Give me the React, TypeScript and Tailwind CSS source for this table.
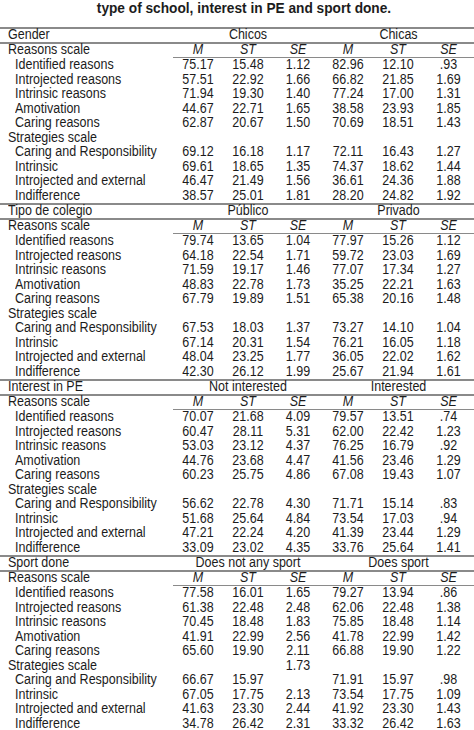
type Row = { label: string; v: string[] };

interface SectionData {
  title: string;
  g1: string;
  g2: string;
  reasons: Row[];
  strategiesSE?: string[];
  strategies: Row[];
}

const sections: SectionData[] = [
  {
    title: 'Gender',
    g1: 'Chicos',
    g2: 'Chicas',
    reasons: [
      { label: 'Identified reasons', v: ['75.17', '15.48', '1.12', '82.96', '12.10', '.93'] },
      { label: 'Introjected reasons', v: ['57.51', '22.92', '1.66', '66.82', '21.85', '1.69'] },
      { label: 'Intrinsic reasons', v: ['71.94', '19.30', '1.40', '77.24', '17.00', '1.31'] },
      { label: 'Amotivation', v: ['44.67', '22.71', '1.65', '38.58', '23.93', '1.85'] },
      { label: 'Caring reasons', v: ['62.87', '20.67', '1.50', '70.69', '18.51', '1.43'] },
    ],
    strategies: [
      { label: 'Caring and Responsibility', v: ['69.12', '16.18', '1.17', '72.11', '16.43', '1.27'] },
      { label: 'Intrinsic', v: ['69.61', '18.65', '1.35', '74.37', '18.62', '1.44'] },
      { label: 'Introjected and external', v: ['46.47', '21.49', '1.56', '36.61', '24.36', '1.88'] },
      { label: 'Indifference', v: ['38.57', '25.01', '1.81', '28.20', '24.82', '1.92'] },
    ],
  },
  {
    title: 'Tipo de colegio',
    g1: 'Público',
    g2: 'Privado',
    reasons: [
      { label: 'Identified reasons', v: ['79.74', '13.65', '1.04', '77.97', '15.26', '1.12'] },
      { label: 'Introjected reasons', v: ['64.18', '22.54', '1.71', '59.72', '23.03', '1.69'] },
      { label: 'Intrinsic reasons', v: ['71.59', '19.17', '1.46', '77.07', '17.34', '1.27'] },
      { label: 'Amotivation', v: ['48.83', '22.78', '1.73', '35.25', '22.21', '1.63'] },
      { label: 'Caring reasons', v: ['67.79', '19.89', '1.51', '65.38', '20.16', '1.48'] },
    ],
    strategies: [
      { label: 'Caring and Responsibility', v: ['67.53', '18.03', '1.37', '73.27', '14.10', '1.04'] },
      { label: 'Intrinsic', v: ['67.14', '20.31', '1.54', '76.21', '16.05', '1.18'] },
      { label: 'Introjected and external', v: ['48.04', '23.25', '1.77', '36.05', '22.02', '1.62'] },
      { label: 'Indifference', v: ['42.30', '26.12', '1.99', '25.67', '21.94', '1.61'] },
    ],
  },
  {
    title: 'Interest in PE',
    g1: 'Not interested',
    g2: 'Interested',
    reasons: [
      { label: 'Identified reasons', v: ['70.07', '21.68', '4.09', '79.57', '13.51', '.74'] },
      { label: 'Introjected reasons', v: ['60.47', '28.11', '5.31', '62.00', '22.42', '1.23'] },
      { label: 'Intrinsic reasons', v: ['53.03', '23.12', '4.37', '76.25', '16.79', '.92'] },
      { label: 'Amotivation', v: ['44.76', '23.68', '4.47', '41.56', '23.46', '1.29'] },
      { label: 'Caring reasons', v: ['60.23', '25.75', '4.86', '67.08', '19.43', '1.07'] },
    ],
    strategies: [
      { label: 'Caring and Responsibility', v: ['56.62', '22.78', '4.30', '71.71', '15.14', '.83'] },
      { label: 'Intrinsic', v: ['51.68', '25.64', '4.84', '73.54', '17.03', '.94'] },
      { label: 'Introjected and external', v: ['47.21', '22.24', '4.20', '41.39', '23.44', '1.29'] },
      { label: 'Indifference', v: ['33.09', '23.02', '4.35', '33.76', '25.64', '1.41'] },
    ],
  },
  {
    title: 'Sport done',
    g1: 'Does not any sport',
    g2: 'Does sport',
    reasons: [
      { label: 'Identified reasons', v: ['77.58', '16.01', '1.65', '79.27', '13.94', '.86'] },
      { label: 'Introjected reasons', v: ['61.38', '22.48', '2.48', '62.06', '22.48', '1.38'] },
      { label: 'Intrinsic reasons', v: ['70.45', '18.48', '1.83', '75.85', '18.48', '1.14'] },
      { label: 'Amotivation', v: ['41.91', '22.99', '2.56', '41.78', '22.99', '1.42'] },
      { label: 'Caring reasons', v: ['65.60', '19.90', '2.11', '66.88', '19.90', '1.22'] },
    ],
    strategiesSE: ['', '', '1.73', '', '', ''],
    strategies: [
      { label: 'Caring and Responsibility', v: ['66.67', '15.97', '', '71.91', '15.97', '.98'] },
      { label: 'Intrinsic', v: ['67.05', '17.75', '2.13', '73.54', '17.75', '1.09'] },
      { label: 'Introjected and external', v: ['41.63', '23.30', '2.44', '41.92', '23.30', '1.43'] },
      { label: 'Indifference', v: ['34.78', '26.42', '2.31', '33.32', '26.42', '1.63'] },
    ],
  },
];

const cols = 'grid grid-cols-[173px_50px_50px_50px_50px_50px_51px]';

// the scan is a bit taller than Arial at this width
function T({ children, className = '' }: { children: React.ReactNode; className?: string }) {
  return <span className={`inline-block scale-y-[1.12] whitespace-nowrap ${className}`}>{children}</span>;
}

function DataRow({ label, v, indent = true }: { label: string; v: string[]; indent?: boolean }) {
  return (
    <div className={`${cols} h-[14.5px] leading-[14.5px]`}>
      <div className={indent ? 'pl-[15px]' : 'pl-[8px]'}>
        <T>{label}</T>
      </div>
      {v.map((x, i) => (
        <div key={i} className="text-center">
          <T>{x}</T>
        </div>
      ))}
    </div>
  );
}

function Section({ s }: { s: SectionData }) {
  return (
    <div>
      <div className={`${cols} h-[17px] leading-[13px] border-t-2 border-b-2 border-[#8a8a8a]`}>
        <div className="pl-[8px]">
          <T>{s.title}</T>
        </div>
        <div className="col-span-3 text-center">
          <T>{s.g1}</T>
        </div>
        <div className="col-span-3 text-center">
          <T>{s.g2}</T>
        </div>
      </div>
      <div className={`${cols} h-[14px] leading-[13px]`}>
        <div className="pl-[8px]">
          <T>Reasons scale</T>
        </div>
        {['M', 'ST', 'SE', 'M', 'ST', 'SE'].map((h, i) => (
          <div key={i} className="text-center italic border-b border-[#8a8a8a]">
            <T>{h}</T>
          </div>
        ))}
      </div>
      {s.reasons.map((r) => (
        <DataRow key={r.label} label={r.label} v={r.v} />
      ))}
      <DataRow label="Strategies scale" v={s.strategiesSE ?? ['', '', '', '', '', '']} indent={false} />
      {s.strategies.map((r) => (
        <DataRow key={r.label} label={r.label} v={r.v} />
      ))}
    </div>
  );
}

export default function App() {
  return (
    <div className="w-[474px] h-[730px] overflow-hidden bg-white text-[#1c1c1c] font-['Liberation_Sans',Arial,sans-serif] text-[12.5px]">
      <div className="h-[27px] flex justify-center pl-[14px]">
        <T className="font-bold text-[13.7px] leading-[17px] scale-y-[1.12]">
          type of school, interest in PE and sport done.
        </T>
      </div>
      {sections.map((s) => (
        <Section key={s.title} s={s} />
      ))}
    </div>
  );
}
